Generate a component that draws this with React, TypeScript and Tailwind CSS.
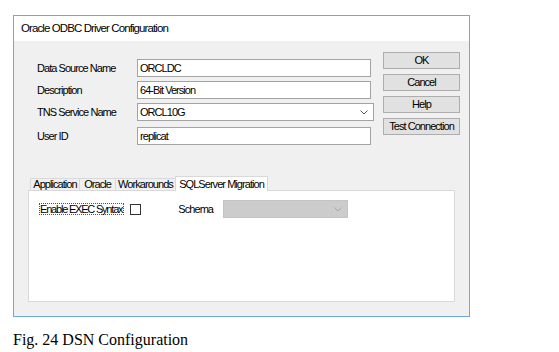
const ui = "font-['Liberation_Sans',Arial,sans-serif] text-[11px] tracking-[-0.95px] text-black leading-none whitespace-nowrap"

function Field({ value }: { value: string }) {
	return (
		<div className="flex h-[18px] w-[234px] items-center border border-[#a3a3a3] bg-white pl-[2px]">
			{value}
		</div>
	)
}

function Chevron({ color }: { color: string }) {
	return (
		<svg width="8" height="5" viewBox="0 0 8 5" className="shrink-0">
			<polyline points="0.5,0.5 4,4 7.5,0.5" fill="none" stroke={color} strokeWidth="1" />
		</svg>
	)
}

function Button({ label }: { label: string }) {
	return (
		<div className="flex h-[17px] w-[77px] items-center justify-center border border-[#adadad] bg-[#e1e1e1]">
			{label}
		</div>
	)
}

export default function App() {
	const tabs = [
		{ label: "Application", width: "w-[50px]" },
		{ label: "Oracle", width: "w-[37px]" },
		{ label: "Workarounds", width: "w-[61px]" },
	]

	return (
		<div className="h-[352px] w-[559px] bg-white pl-[13px] pt-[15px]">
			<div className={`flex h-[302px] w-[457px] flex-col border border-[#6ea8df] bg-[#f0f0f0] ${ui}`}>
				<div className="flex h-[25px] shrink-0 items-center bg-white pl-[7px] text-[11.5px] tracking-[-0.9px]">
					Oracle ODBC Driver Configuration
				</div>

				<div className="flex h-[135px] shrink-0 pl-[23px] pt-[11px]">
					<div className="flex w-[337px] flex-col pt-[7px]">
						<div className="flex items-center">
							<span className="w-[100px]">Data Source Name</span>
							<Field value="ORCLDC" />
						</div>
						<div className="mt-[4px] flex items-center">
							<span className="w-[100px]">Description</span>
							<Field value="64-Bit Version" />
						</div>
						<div className="mt-[4px] flex items-center">
							<span className="w-[100px]">TNS Service Name</span>
							<div className="flex h-[18px] w-[237px] items-center justify-between border border-[#a3a3a3] bg-white pl-[2px] pr-[5px]">
								<span>ORCL10G</span>
								<Chevron color="#555555" />
							</div>
						</div>
						<div className="mt-[6px] flex items-center">
							<span className="w-[100px]">User ID</span>
							<Field value="replicat" />
						</div>
					</div>

					<div className="ml-[9px] flex flex-col gap-[5px]">
						<Button label="OK" />
						<Button label="Cancel" />
						<Button label="Help" />
						<Button label="Test Connection" />
					</div>
				</div>

				<div className="flex flex-col px-[14px]">
					<div className="flex h-[14px] items-end pl-[2px]">
						{tabs.map((tab) => (
							<div
								key={tab.label}
								className={`flex h-[12px] ${tab.width} -ml-px items-center justify-center border border-b-0 border-[#d9d9d9] bg-[#f0f0f0] first:ml-0`}
							>
								{tab.label}
							</div>
						))}
						<div className="relative z-10 -mb-px -ml-px flex h-[15px] w-[93px] items-center justify-center border border-b-0 border-[#d9d9d9] bg-white">
							SQLServer Migration
						</div>
					</div>

					<div className="flex h-[112px] flex-col border border-[#d9d9d9] bg-white pl-[10px] pt-[9px]">
						<div className="flex items-center">
							<span className="flex h-[12px] items-center border border-dotted border-[#555555] pr-[1px] tracking-[-1.2px]">Enable EXEC Syntax</span>
							<span className="ml-[6px] h-[11px] w-[11px] border border-[#333333] bg-white" />
							<span className="ml-[37px]">Schema</span>
							<div className="ml-[10px] flex h-[18px] w-[125px] items-center justify-end border border-[#c4c4c4] bg-[#cccccc] pr-[5px]">
								<Chevron color="#a8a8a8" />
							</div>
						</div>
					</div>
				</div>
			</div>

			<div className="mt-[15px] font-['Liberation_Serif',serif] text-[16px] leading-none text-black">
				Fig. 24 DSN Configuration
			</div>
		</div>
	)
}
